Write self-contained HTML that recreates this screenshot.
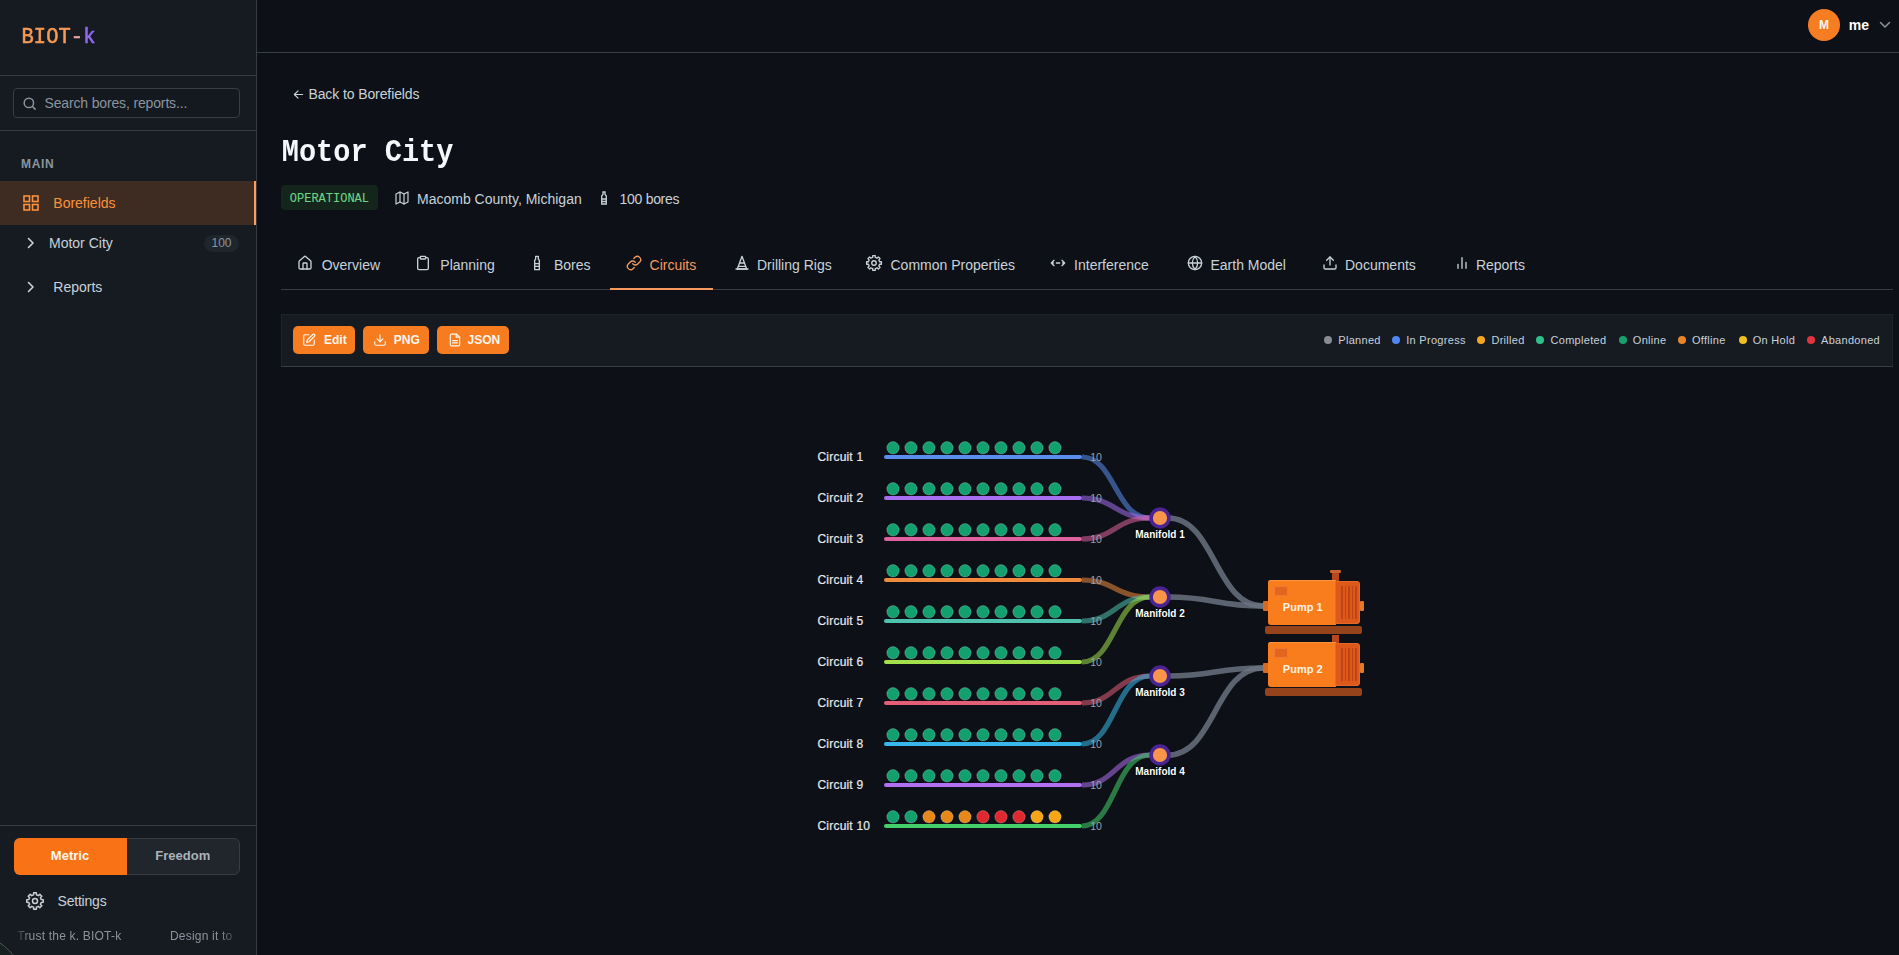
<!DOCTYPE html>
<html><head><meta charset="utf-8"><title>BIOT-k — Motor City Circuits</title>
<style>
html,body{margin:0;padding:0;}
body{width:1899px;height:955px;overflow:hidden;background:#0d1117;font-family:'Liberation Sans', sans-serif;position:relative;}
.t{position:absolute;white-space:pre;font-family:'Liberation Sans', sans-serif;}
.r{position:absolute;}
</style></head><body>
<div class="r" style="left:0px;top:0px;width:256px;height:955px;background:#161b22;"></div>
<div class="r" style="left:256px;top:0px;width:1px;height:955px;background:#383d45;"></div>
<div class="t" style="left:21.5px;top:27.50px;font-family:'Liberation Mono', monospace;font-size:20.4px;line-height:20.4px;font-weight:400;-webkit-text-stroke:0.55px currentColor;transform:scaleY(1.06);transform-origin:0 15.5px;letter-spacing:0.1px;"><span style="color:#f79a55">BIOT</span><span style="color:#eba2a6">-</span><span style="color:#9068f2">k</span></div>
<div class="r" style="left:0px;top:75px;width:256px;height:1px;background:#383d45;"></div>
<div class="r" style="left:13px;top:88px;width:227px;height:30px;background:#14191f;border:1px solid #383d45;border-radius:4px;box-sizing:border-box;"></div>
<svg class="r" style="left:21.5px;top:95.5px" width="15" height="15" viewBox="0 0 24 24" fill="none" stroke="#8b949e" stroke-width="2.4" stroke-linecap="round"><circle cx="11" cy="11" r="7.5"/><path d="M21 21l-4.3-4.3"/></svg>
<div class="t" style="left:44.5px;top:96.40px;font-size:14px;line-height:14px;color:#8b949e;font-weight:400;letter-spacing:-0.15px;">Search bores, reports...</div>
<div class="r" style="left:0px;top:130px;width:256px;height:1px;background:#383d45;"></div>
<div class="t" style="left:21px;top:157.80px;font-size:12px;line-height:12px;color:#8b949e;font-weight:700;letter-spacing:0.7px;">MAIN</div>
<div class="r" style="left:0px;top:181px;width:256px;height:44px;background:#3e2b21;"></div>
<div class="r" style="left:254px;top:181px;width:2px;height:44px;background:#f7a05a;"></div>
<svg class="r" style="left:23px;top:195px" width="16" height="16" viewBox="0 0 16 16" fill="none" stroke="#fb923c" stroke-width="1.6"><rect x="1" y="1" width="5.5" height="5.5"/><rect x="9.5" y="1" width="5.5" height="5.5"/><rect x="1" y="9.5" width="5.5" height="5.5"/><rect x="9.5" y="9.5" width="5.5" height="5.5"/></svg>
<div class="t" style="left:53.3px;top:196.40px;font-size:14px;line-height:14px;color:#fb923c;font-weight:400;">Borefields</div>
<svg class="r" style="left:26px;top:237px" width="10" height="12" viewBox="0 0 10 12" fill="none" stroke="#c9d1d9" stroke-width="1.6" stroke-linecap="round" stroke-linejoin="round"><path d="M2.5 1.5l4.5 4.5-4.5 4.5"/></svg>
<div class="t" style="left:49px;top:236.10px;font-size:14px;line-height:14px;color:#c9d1d9;font-weight:400;">Motor City</div>
<div class="r" style="left:204px;top:235px;width:35px;height:17px;background:#1f252d;border-radius:9px;"></div>
<div class="t" style="left:221.5px;top:237.30px;font-size:12px;line-height:12px;color:#8b949e;font-weight:400;transform:translateX(-50%);">100</div>
<svg class="r" style="left:26px;top:281px" width="10" height="12" viewBox="0 0 10 12" fill="none" stroke="#c9d1d9" stroke-width="1.6" stroke-linecap="round" stroke-linejoin="round"><path d="M2.5 1.5l4.5 4.5-4.5 4.5"/></svg>
<div class="t" style="left:53.3px;top:280.10px;font-size:14px;line-height:14px;color:#c9d1d9;font-weight:400;">Reports</div>
<div class="r" style="left:0px;top:825px;width:256px;height:1px;background:#383d45;"></div>
<div class="r" style="left:14px;top:838px;width:226px;height:37px;background:#21262d;border:1px solid #383d45;border-radius:6px;box-sizing:border-box;"></div>
<div class="r" style="left:14px;top:838px;width:113px;height:37px;background:#f97316;border-radius:6px 0 0 6px;"></div>
<div class="t" style="left:70px;top:849.45px;font-size:13px;line-height:13px;color:#fff7ed;font-weight:700;transform:translateX(-50%);">Metric</div>
<div class="t" style="left:182.8px;top:849.45px;font-size:13px;line-height:13px;color:#aab2bb;font-weight:700;transform:translateX(-50%);">Freedom</div>
<svg class="r" style="left:25px;top:891px" width="20" height="20" viewBox="0 0 24 24" fill="none" stroke="#c9d1d9" stroke-width="1.8" stroke-linecap="round" stroke-linejoin="round"><path d="M10.28 4.60 L10.36 2.14 L13.64 2.14 L13.72 4.60 L16.02 5.55 L17.81 3.86 L20.14 6.19 L18.45 7.98 L19.40 10.28 L21.86 10.36 L21.86 13.64 L19.40 13.72 L18.45 16.02 L20.14 17.81 L17.81 20.14 L16.02 18.45 L13.72 19.40 L13.64 21.86 L10.36 21.86 L10.28 19.40 L7.98 18.45 L6.19 20.14 L3.86 17.81 L5.55 16.02 L4.60 13.72 L2.14 13.64 L2.14 10.36 L4.60 10.28 L5.55 7.98 L3.86 6.19 L6.19 3.86 L7.98 5.55z"/><circle cx="12" cy="12" r="3"/></svg>
<div class="t" style="left:57.5px;top:894.30px;font-size:14px;line-height:14px;color:#c9d1d9;font-weight:400;letter-spacing:-0.2px;">Settings</div>
<div class="r" style="left:14px;top:920px;width:226px;height:30px;overflow:hidden;-webkit-mask-image:linear-gradient(to right,transparent 0,#000 16px,#000 206px,transparent 226px);mask-image:linear-gradient(to right,transparent 0,#000 16px,#000 206px,transparent 226px);"><div class="r" style="left:-14px;top:-920px;width:256px;height:955px;"><div class="t" style="left:17.3px;top:930.20px;font-size:12px;line-height:12px;color:#8b949e;font-weight:400;letter-spacing:0.2px;">Trust the k. BIOT-k</div>
<div class="t" style="left:170px;top:930.20px;font-size:12px;line-height:12px;color:#8b949e;font-weight:400;letter-spacing:0.2px;">Design it to</div>
</div></div><div class="r" style="left:-109.6px;top:930.4px;width:139.2px;height:139.2px;border-radius:50%;background:#16201f;border:1.5px solid #52575a;box-sizing:border-box;"></div><div class="r" style="left:257px;top:52px;width:1642px;height:1px;background:#383d45;"></div>
<div class="r" style="left:1808px;top:9px;width:32px;height:32px;background:#f77d22;border-radius:50%;"></div>
<div class="t" style="left:1824px;top:18.60px;font-size:12px;line-height:12px;color:#fff7ed;font-weight:700;transform:translateX(-50%);">M</div>
<div class="t" style="left:1848.8px;top:18.00px;font-size:14px;line-height:14px;color:#ffffff;font-weight:700;">me</div>
<svg class="r" style="left:1879px;top:20px" width="12" height="10" viewBox="0 0 12 10" fill="none" stroke="#8b949e" stroke-width="1.5" stroke-linecap="round" stroke-linejoin="round"><path d="M1.5 2.5l4.5 4.5 4.5-4.5"/></svg>
<svg class="r" style="left:293px;top:89px" width="11" height="11" viewBox="0 0 12 12" fill="none" stroke="#c9d1d9" stroke-width="1.3" stroke-linecap="round" stroke-linejoin="round"><path d="M10.5 6H1.5M5.5 2L1.5 6l4 4"/></svg>
<div class="t" style="left:308.4px;top:87.00px;font-size:14px;line-height:14px;color:#c9d1d9;font-weight:400;letter-spacing:-0.1px;">Back to Borefields</div>
<div class="t" style="left:281.8px;top:139.66px;font-size:28.6px;line-height:28.6px;color:#f5f7fa;font-weight:700;font-family:'Liberation Mono', monospace;transform:scaleY(1.12);transform-origin:0 21.736px;">Motor City</div>
<div class="r" style="left:281px;top:185px;width:97px;height:25px;background:#14261b;border-radius:4px;"></div>
<div class="t" style="left:289.8px;top:192.68px;font-size:12px;line-height:12px;color:#6fd488;font-weight:400;font-family:'Liberation Mono', monospace;-webkit-text-stroke:0.1px currentColor;">OPERATIONAL</div>
<svg class="r" style="left:394px;top:190px" width="16" height="16" viewBox="0 0 24 24" fill="none" stroke="#c9d1d9" stroke-width="1.8" stroke-linecap="round" stroke-linejoin="round"><path d="M3 6l6-3 6 3 6-3v15l-6 3-6-3-6 3z"/><path d="M9 3v15M15 6v15"/></svg>
<div class="t" style="left:417px;top:191.50px;font-size:14px;line-height:14px;color:#c9d1d9;font-weight:400;">Macomb County, Michigan</div>
<svg class="r" style="left:600px;top:191px" width="8" height="14" viewBox="0 0 8 14" fill="none" stroke="#c9d1d9" stroke-width="1.3"><path d="M3 1h2v2.5l1.3 1.5v8H1.7V5L3 3.5z"/><path d="M2 8h4M2 10.5h4"/></svg>
<div class="t" style="left:619.6px;top:191.50px;font-size:14px;line-height:14px;color:#c9d1d9;font-weight:400;letter-spacing:-0.3px;">100 bores</div>
<div class="r" style="left:281px;top:289px;width:1612px;height:1px;background:#383d45;"></div>
<div class="r" style="left:610px;top:288px;width:103px;height:2px;background:#f59a5e;"></div>
<svg class="r" style="left:296.5px;top:255.0px" width="16" height="16" viewBox="0 0 24 24" fill="none" stroke="#c9d1d9" stroke-width="2" stroke-linecap="round" stroke-linejoin="round"><path d="M15 21v-8a1 1 0 0 0-1-1h-4a1 1 0 0 0-1 1v8"/><path d="M3 10a2 2 0 0 1 .709-1.528l7-5.999a2 2 0 0 1 2.582 0l7 5.999A2 2 0 0 1 21 10v9a2 2 0 0 1-2 2H5a2 2 0 0 1-2-2z"/></svg>
<div class="t" style="left:321.7px;top:258.10px;font-size:14px;line-height:14px;color:#c9d1d9;font-weight:400;">Overview</div>
<svg class="r" style="left:415.0px;top:255.0px" width="16" height="16" viewBox="0 0 24 24" fill="none" stroke="#c9d1d9" stroke-width="2" stroke-linecap="round" stroke-linejoin="round"><rect width="8" height="4" x="8" y="2" rx="1"/><path d="M16 4h2a2 2 0 0 1 2 2v14a2 2 0 0 1-2 2H6a2 2 0 0 1-2-2V6a2 2 0 0 1 2-2h2"/></svg>
<div class="t" style="left:440.3px;top:258.10px;font-size:14px;line-height:14px;color:#c9d1d9;font-weight:400;">Planning</div>
<svg class="r" style="left:529.0px;top:255.0px" width="16" height="16" viewBox="0 0 24 24" fill="none" stroke="#c9d1d9" stroke-width="2" stroke-linecap="round" stroke-linejoin="round"><path d="M10 2h4v4l1.5 2v14h-7V8L10 6z"/><path d="M9 13h6M9 17h6"/></svg>
<div class="t" style="left:554px;top:258.10px;font-size:14px;line-height:14px;color:#c9d1d9;font-weight:400;">Bores</div>
<svg class="r" style="left:625.9px;top:255.0px" width="16" height="16" viewBox="0 0 24 24" fill="none" stroke="#f59a5e" stroke-width="2" stroke-linecap="round" stroke-linejoin="round"><path d="M10 13a5 5 0 0 0 7.54.54l3-3a5 5 0 0 0-7.07-7.07l-1.72 1.71"/><path d="M14 11a5 5 0 0 0-7.54-.54l-3 3a5 5 0 0 0 7.07 7.07l1.71-1.71"/></svg>
<div class="t" style="left:649.6px;top:258.10px;font-size:14px;line-height:14px;color:#f59a5e;font-weight:400;">Circuits</div>
<svg class="r" style="left:734.0px;top:255.0px" width="16" height="16" viewBox="0 0 24 24" fill="none" stroke="#c9d1d9" stroke-width="2" stroke-linecap="round" stroke-linejoin="round"><path d="M12 2L5 21h14z"/><path d="M9 12h6M7 17h10M3 21h18"/></svg>
<div class="t" style="left:757px;top:258.10px;font-size:14px;line-height:14px;color:#c9d1d9;font-weight:400;">Drilling Rigs</div>
<svg class="r" style="left:865.2px;top:254.0px" width="18" height="18" viewBox="0 0 24 24" fill="none" stroke="#c9d1d9" stroke-width="1.8" stroke-linecap="round" stroke-linejoin="round"><path d="M10.28 4.60 L10.36 2.14 L13.64 2.14 L13.72 4.60 L16.02 5.55 L17.81 3.86 L20.14 6.19 L18.45 7.98 L19.40 10.28 L21.86 10.36 L21.86 13.64 L19.40 13.72 L18.45 16.02 L20.14 17.81 L17.81 20.14 L16.02 18.45 L13.72 19.40 L13.64 21.86 L10.36 21.86 L10.28 19.40 L7.98 18.45 L6.19 20.14 L3.86 17.81 L5.55 16.02 L4.60 13.72 L2.14 13.64 L2.14 10.36 L4.60 10.28 L5.55 7.98 L3.86 6.19 L6.19 3.86 L7.98 5.55z"/><circle cx="12" cy="12" r="3"/></svg>
<div class="t" style="left:890.5px;top:258.10px;font-size:14px;line-height:14px;color:#c9d1d9;font-weight:400;">Common Properties</div>
<svg class="r" style="left:1050.4px;top:255.0px" width="16" height="16" viewBox="0 0 24 24" fill="none" stroke="#c9d1d9" stroke-width="2" stroke-linecap="round" stroke-linejoin="round"><path d="M6 8l-4 4 4 4M18 8l4 4-4 4M2 12h3M9.5 12h5M19 12h3"/></svg>
<div class="t" style="left:1074.1px;top:258.10px;font-size:14px;line-height:14px;color:#c9d1d9;font-weight:400;">Interference</div>
<svg class="r" style="left:1186.8px;top:255.0px" width="16" height="16" viewBox="0 0 24 24" fill="none" stroke="#c9d1d9" stroke-width="2" stroke-linecap="round" stroke-linejoin="round"><circle cx="12" cy="12" r="10"/><path d="M2 12h20"/><path d="M12 2a15 15 0 0 1 4 10 15 15 0 0 1-4 10 15 15 0 0 1-4-10 15 15 0 0 1 4-10z"/></svg>
<div class="t" style="left:1210.5px;top:258.10px;font-size:14px;line-height:14px;color:#c9d1d9;font-weight:400;">Earth Model</div>
<svg class="r" style="left:1322.0px;top:255.0px" width="16" height="16" viewBox="0 0 24 24" fill="none" stroke="#c9d1d9" stroke-width="2" stroke-linecap="round" stroke-linejoin="round"><path d="M21 15v4a2 2 0 0 1-2 2H5a2 2 0 0 1-2-2v-4"/><path d="M17 8l-5-5-5 5"/><path d="M12 3v12"/></svg>
<div class="t" style="left:1345px;top:258.10px;font-size:14px;line-height:14px;color:#c9d1d9;font-weight:400;">Documents</div>
<svg class="r" style="left:1454.0px;top:255.0px" width="16" height="16" viewBox="0 0 24 24" fill="none" stroke="#c9d1d9" stroke-width="2" stroke-linecap="round" stroke-linejoin="round"><path d="M6 20v-6M12 20V4M18 20v-9"/></svg>
<div class="t" style="left:1475.9px;top:258.10px;font-size:14px;line-height:14px;color:#c9d1d9;font-weight:400;">Reports</div>
<div class="r" style="left:281px;top:314px;width:1612px;height:52px;background:#161b22;box-shadow:inset 1px 1px 0 #1e2329,inset -1px 0 0 #1e2329;"></div>
<div class="r" style="left:281px;top:366px;width:1612px;height:1px;background:#383d45;"></div>
<div class="r" style="left:293px;top:326px;width:62px;height:28px;background:#f77b1f;border-radius:5px;"></div>
<svg class="r" style="left:301.7px;top:333px" width="14" height="14" viewBox="0 0 24 24" fill="none" stroke="#fff7ed" stroke-width="2" stroke-linecap="round" stroke-linejoin="round"><path d="M12 3H5a2 2 0 0 0-2 2v14a2 2 0 0 0 2 2h14a2 2 0 0 0 2-2v-7"/><path d="M18.4 2.6a2.1 2.1 0 0 1 3 3L12 15l-4 1 1-4z"/></svg>
<div class="t" style="left:324px;top:334.00px;font-size:12px;line-height:12px;color:#fff7ed;font-weight:700;">Edit</div>
<div class="r" style="left:363px;top:326px;width:66px;height:28px;background:#f77b1f;border-radius:5px;"></div>
<svg class="r" style="left:372.8px;top:333px" width="14" height="14" viewBox="0 0 24 24" fill="none" stroke="#fff7ed" stroke-width="2" stroke-linecap="round" stroke-linejoin="round"><path d="M21 15v4a2 2 0 0 1-2 2H5a2 2 0 0 1-2-2v-4"/><path d="M7 10l5 5 5-5"/><path d="M12 15V3"/></svg>
<div class="t" style="left:393.8px;top:334.00px;font-size:12px;line-height:12px;color:#fff7ed;font-weight:700;">PNG</div>
<div class="r" style="left:437px;top:326px;width:72px;height:28px;background:#f77b1f;border-radius:5px;"></div>
<svg class="r" style="left:447.8px;top:333px" width="14" height="14" viewBox="0 0 24 24" fill="none" stroke="#fff7ed" stroke-width="2" stroke-linecap="round" stroke-linejoin="round"><path d="M15 2H6a2 2 0 0 0-2 2v16a2 2 0 0 0 2 2h12a2 2 0 0 0 2-2V7z"/><path d="M14 2v5h6M8 13h8M8 17h8"/></svg>
<div class="t" style="left:467.5px;top:334.00px;font-size:12px;line-height:12px;color:#fff7ed;font-weight:700;">JSON</div>
<div class="r" style="left:1323.7px;top:336px;width:8px;height:8px;background:#868b94;border-radius:50%;"></div>
<div class="t" style="left:1338.3px;top:334.75px;font-size:11px;line-height:11px;color:#c9d1d9;font-weight:400;letter-spacing:0.3px;">Planned</div>
<div class="r" style="left:1391.7px;top:336px;width:8px;height:8px;background:#4f86f0;border-radius:50%;"></div>
<div class="t" style="left:1406.2px;top:334.75px;font-size:11px;line-height:11px;color:#c9d1d9;font-weight:400;letter-spacing:0.3px;">In Progress</div>
<div class="r" style="left:1476.8px;top:336px;width:8px;height:8px;background:#f5a524;border-radius:50%;"></div>
<div class="t" style="left:1491.4px;top:334.75px;font-size:11px;line-height:11px;color:#c9d1d9;font-weight:400;letter-spacing:0.3px;">Drilled</div>
<div class="r" style="left:1536px;top:336px;width:8px;height:8px;background:#2fbf8a;border-radius:50%;"></div>
<div class="t" style="left:1550.5px;top:334.75px;font-size:11px;line-height:11px;color:#c9d1d9;font-weight:400;letter-spacing:0.3px;">Completed</div>
<div class="r" style="left:1619.2px;top:336px;width:8px;height:8px;background:#16a06e;border-radius:50%;"></div>
<div class="t" style="left:1632.8px;top:334.75px;font-size:11px;line-height:11px;color:#c9d1d9;font-weight:400;letter-spacing:0.3px;">Online</div>
<div class="r" style="left:1678px;top:336px;width:8px;height:8px;background:#e8852a;border-radius:50%;"></div>
<div class="t" style="left:1692px;top:334.75px;font-size:11px;line-height:11px;color:#c9d1d9;font-weight:400;letter-spacing:0.3px;">Offline</div>
<div class="r" style="left:1739px;top:336px;width:8px;height:8px;background:#f0c020;border-radius:50%;"></div>
<div class="t" style="left:1752.7px;top:334.75px;font-size:11px;line-height:11px;color:#c9d1d9;font-weight:400;letter-spacing:0.3px;">On Hold</div>
<div class="r" style="left:1807px;top:336px;width:8px;height:8px;background:#e2343a;border-radius:50%;"></div>
<div class="t" style="left:1821px;top:334.75px;font-size:11px;line-height:11px;color:#c9d1d9;font-weight:400;letter-spacing:0.3px;">Abandoned</div>
<svg class="r" style="left:0;top:0" width="1899" height="955" viewBox="0 0 1899 955"><path d="M1168 518 C1215 518 1215 606 1263 606" stroke="#6b7280" stroke-opacity="0.85" stroke-width="5.5" fill="none"/><path d="M1168 597 C1215 597 1215 606 1263 606" stroke="#6b7280" stroke-opacity="0.85" stroke-width="5.5" fill="none"/><path d="M1168 676 C1215 676 1215 668 1263 668" stroke="#6b7280" stroke-opacity="0.85" stroke-width="5.5" fill="none"/><path d="M1168 755 C1215 755 1215 668 1263 668" stroke="#6b7280" stroke-opacity="0.85" stroke-width="5.5" fill="none"/><path d="M1082 457 C1115 457 1115 518 1150 518" stroke="#5b8dee" stroke-opacity="0.55" stroke-width="5.2" fill="none"/><path d="M1082 498 C1115 498 1115 518 1150 518" stroke="#a66ef0" stroke-opacity="0.55" stroke-width="5.2" fill="none"/><path d="M1082 539 C1115 539 1115 518 1150 518" stroke="#e0619f" stroke-opacity="0.55" stroke-width="5.2" fill="none"/><path d="M1082 580 C1115 580 1115 597 1150 597" stroke="#f08a3c" stroke-opacity="0.55" stroke-width="5.2" fill="none"/><path d="M1082 621 C1115 621 1115 597 1150 597" stroke="#4fc2ae" stroke-opacity="0.55" stroke-width="5.2" fill="none"/><path d="M1082 662 C1115 662 1115 597 1150 597" stroke="#a3e04a" stroke-opacity="0.55" stroke-width="5.2" fill="none"/><path d="M1082 703 C1115 703 1115 676 1150 676" stroke="#e35f78" stroke-opacity="0.55" stroke-width="5.2" fill="none"/><path d="M1082 744 C1115 744 1115 676 1150 676" stroke="#38b8ea" stroke-opacity="0.55" stroke-width="5.2" fill="none"/><path d="M1082 785 C1115 785 1115 755 1150 755" stroke="#b070ef" stroke-opacity="0.55" stroke-width="5.2" fill="none"/><path d="M1082 826 C1115 826 1115 755 1150 755" stroke="#45cf6a" stroke-opacity="0.55" stroke-width="5.2" fill="none"/><line x1="886" y1="457" x2="1080" y2="457" stroke="#5b8dee" stroke-width="4" stroke-linecap="round"/><circle cx="893" cy="447.8" r="6.2" fill="#12a06f" stroke="#ffffff" stroke-opacity="0.22" stroke-width="1"/><circle cx="911" cy="447.8" r="6.2" fill="#12a06f" stroke="#ffffff" stroke-opacity="0.22" stroke-width="1"/><circle cx="929" cy="447.8" r="6.2" fill="#12a06f" stroke="#ffffff" stroke-opacity="0.22" stroke-width="1"/><circle cx="947" cy="447.8" r="6.2" fill="#12a06f" stroke="#ffffff" stroke-opacity="0.22" stroke-width="1"/><circle cx="965" cy="447.8" r="6.2" fill="#12a06f" stroke="#ffffff" stroke-opacity="0.22" stroke-width="1"/><circle cx="983" cy="447.8" r="6.2" fill="#12a06f" stroke="#ffffff" stroke-opacity="0.22" stroke-width="1"/><circle cx="1001" cy="447.8" r="6.2" fill="#12a06f" stroke="#ffffff" stroke-opacity="0.22" stroke-width="1"/><circle cx="1019" cy="447.8" r="6.2" fill="#12a06f" stroke="#ffffff" stroke-opacity="0.22" stroke-width="1"/><circle cx="1037" cy="447.8" r="6.2" fill="#12a06f" stroke="#ffffff" stroke-opacity="0.22" stroke-width="1"/><circle cx="1055" cy="447.8" r="6.2" fill="#12a06f" stroke="#ffffff" stroke-opacity="0.22" stroke-width="1"/><line x1="886" y1="498" x2="1080" y2="498" stroke="#a66ef0" stroke-width="4" stroke-linecap="round"/><circle cx="893" cy="488.8" r="6.2" fill="#12a06f" stroke="#ffffff" stroke-opacity="0.22" stroke-width="1"/><circle cx="911" cy="488.8" r="6.2" fill="#12a06f" stroke="#ffffff" stroke-opacity="0.22" stroke-width="1"/><circle cx="929" cy="488.8" r="6.2" fill="#12a06f" stroke="#ffffff" stroke-opacity="0.22" stroke-width="1"/><circle cx="947" cy="488.8" r="6.2" fill="#12a06f" stroke="#ffffff" stroke-opacity="0.22" stroke-width="1"/><circle cx="965" cy="488.8" r="6.2" fill="#12a06f" stroke="#ffffff" stroke-opacity="0.22" stroke-width="1"/><circle cx="983" cy="488.8" r="6.2" fill="#12a06f" stroke="#ffffff" stroke-opacity="0.22" stroke-width="1"/><circle cx="1001" cy="488.8" r="6.2" fill="#12a06f" stroke="#ffffff" stroke-opacity="0.22" stroke-width="1"/><circle cx="1019" cy="488.8" r="6.2" fill="#12a06f" stroke="#ffffff" stroke-opacity="0.22" stroke-width="1"/><circle cx="1037" cy="488.8" r="6.2" fill="#12a06f" stroke="#ffffff" stroke-opacity="0.22" stroke-width="1"/><circle cx="1055" cy="488.8" r="6.2" fill="#12a06f" stroke="#ffffff" stroke-opacity="0.22" stroke-width="1"/><line x1="886" y1="539" x2="1080" y2="539" stroke="#e0619f" stroke-width="4" stroke-linecap="round"/><circle cx="893" cy="529.8" r="6.2" fill="#12a06f" stroke="#ffffff" stroke-opacity="0.22" stroke-width="1"/><circle cx="911" cy="529.8" r="6.2" fill="#12a06f" stroke="#ffffff" stroke-opacity="0.22" stroke-width="1"/><circle cx="929" cy="529.8" r="6.2" fill="#12a06f" stroke="#ffffff" stroke-opacity="0.22" stroke-width="1"/><circle cx="947" cy="529.8" r="6.2" fill="#12a06f" stroke="#ffffff" stroke-opacity="0.22" stroke-width="1"/><circle cx="965" cy="529.8" r="6.2" fill="#12a06f" stroke="#ffffff" stroke-opacity="0.22" stroke-width="1"/><circle cx="983" cy="529.8" r="6.2" fill="#12a06f" stroke="#ffffff" stroke-opacity="0.22" stroke-width="1"/><circle cx="1001" cy="529.8" r="6.2" fill="#12a06f" stroke="#ffffff" stroke-opacity="0.22" stroke-width="1"/><circle cx="1019" cy="529.8" r="6.2" fill="#12a06f" stroke="#ffffff" stroke-opacity="0.22" stroke-width="1"/><circle cx="1037" cy="529.8" r="6.2" fill="#12a06f" stroke="#ffffff" stroke-opacity="0.22" stroke-width="1"/><circle cx="1055" cy="529.8" r="6.2" fill="#12a06f" stroke="#ffffff" stroke-opacity="0.22" stroke-width="1"/><line x1="886" y1="580" x2="1080" y2="580" stroke="#f08a3c" stroke-width="4" stroke-linecap="round"/><circle cx="893" cy="570.8" r="6.2" fill="#12a06f" stroke="#ffffff" stroke-opacity="0.22" stroke-width="1"/><circle cx="911" cy="570.8" r="6.2" fill="#12a06f" stroke="#ffffff" stroke-opacity="0.22" stroke-width="1"/><circle cx="929" cy="570.8" r="6.2" fill="#12a06f" stroke="#ffffff" stroke-opacity="0.22" stroke-width="1"/><circle cx="947" cy="570.8" r="6.2" fill="#12a06f" stroke="#ffffff" stroke-opacity="0.22" stroke-width="1"/><circle cx="965" cy="570.8" r="6.2" fill="#12a06f" stroke="#ffffff" stroke-opacity="0.22" stroke-width="1"/><circle cx="983" cy="570.8" r="6.2" fill="#12a06f" stroke="#ffffff" stroke-opacity="0.22" stroke-width="1"/><circle cx="1001" cy="570.8" r="6.2" fill="#12a06f" stroke="#ffffff" stroke-opacity="0.22" stroke-width="1"/><circle cx="1019" cy="570.8" r="6.2" fill="#12a06f" stroke="#ffffff" stroke-opacity="0.22" stroke-width="1"/><circle cx="1037" cy="570.8" r="6.2" fill="#12a06f" stroke="#ffffff" stroke-opacity="0.22" stroke-width="1"/><circle cx="1055" cy="570.8" r="6.2" fill="#12a06f" stroke="#ffffff" stroke-opacity="0.22" stroke-width="1"/><line x1="886" y1="621" x2="1080" y2="621" stroke="#4fc2ae" stroke-width="4" stroke-linecap="round"/><circle cx="893" cy="611.8" r="6.2" fill="#12a06f" stroke="#ffffff" stroke-opacity="0.22" stroke-width="1"/><circle cx="911" cy="611.8" r="6.2" fill="#12a06f" stroke="#ffffff" stroke-opacity="0.22" stroke-width="1"/><circle cx="929" cy="611.8" r="6.2" fill="#12a06f" stroke="#ffffff" stroke-opacity="0.22" stroke-width="1"/><circle cx="947" cy="611.8" r="6.2" fill="#12a06f" stroke="#ffffff" stroke-opacity="0.22" stroke-width="1"/><circle cx="965" cy="611.8" r="6.2" fill="#12a06f" stroke="#ffffff" stroke-opacity="0.22" stroke-width="1"/><circle cx="983" cy="611.8" r="6.2" fill="#12a06f" stroke="#ffffff" stroke-opacity="0.22" stroke-width="1"/><circle cx="1001" cy="611.8" r="6.2" fill="#12a06f" stroke="#ffffff" stroke-opacity="0.22" stroke-width="1"/><circle cx="1019" cy="611.8" r="6.2" fill="#12a06f" stroke="#ffffff" stroke-opacity="0.22" stroke-width="1"/><circle cx="1037" cy="611.8" r="6.2" fill="#12a06f" stroke="#ffffff" stroke-opacity="0.22" stroke-width="1"/><circle cx="1055" cy="611.8" r="6.2" fill="#12a06f" stroke="#ffffff" stroke-opacity="0.22" stroke-width="1"/><line x1="886" y1="662" x2="1080" y2="662" stroke="#a3e04a" stroke-width="4" stroke-linecap="round"/><circle cx="893" cy="652.8" r="6.2" fill="#12a06f" stroke="#ffffff" stroke-opacity="0.22" stroke-width="1"/><circle cx="911" cy="652.8" r="6.2" fill="#12a06f" stroke="#ffffff" stroke-opacity="0.22" stroke-width="1"/><circle cx="929" cy="652.8" r="6.2" fill="#12a06f" stroke="#ffffff" stroke-opacity="0.22" stroke-width="1"/><circle cx="947" cy="652.8" r="6.2" fill="#12a06f" stroke="#ffffff" stroke-opacity="0.22" stroke-width="1"/><circle cx="965" cy="652.8" r="6.2" fill="#12a06f" stroke="#ffffff" stroke-opacity="0.22" stroke-width="1"/><circle cx="983" cy="652.8" r="6.2" fill="#12a06f" stroke="#ffffff" stroke-opacity="0.22" stroke-width="1"/><circle cx="1001" cy="652.8" r="6.2" fill="#12a06f" stroke="#ffffff" stroke-opacity="0.22" stroke-width="1"/><circle cx="1019" cy="652.8" r="6.2" fill="#12a06f" stroke="#ffffff" stroke-opacity="0.22" stroke-width="1"/><circle cx="1037" cy="652.8" r="6.2" fill="#12a06f" stroke="#ffffff" stroke-opacity="0.22" stroke-width="1"/><circle cx="1055" cy="652.8" r="6.2" fill="#12a06f" stroke="#ffffff" stroke-opacity="0.22" stroke-width="1"/><line x1="886" y1="703" x2="1080" y2="703" stroke="#e35f78" stroke-width="4" stroke-linecap="round"/><circle cx="893" cy="693.8" r="6.2" fill="#12a06f" stroke="#ffffff" stroke-opacity="0.22" stroke-width="1"/><circle cx="911" cy="693.8" r="6.2" fill="#12a06f" stroke="#ffffff" stroke-opacity="0.22" stroke-width="1"/><circle cx="929" cy="693.8" r="6.2" fill="#12a06f" stroke="#ffffff" stroke-opacity="0.22" stroke-width="1"/><circle cx="947" cy="693.8" r="6.2" fill="#12a06f" stroke="#ffffff" stroke-opacity="0.22" stroke-width="1"/><circle cx="965" cy="693.8" r="6.2" fill="#12a06f" stroke="#ffffff" stroke-opacity="0.22" stroke-width="1"/><circle cx="983" cy="693.8" r="6.2" fill="#12a06f" stroke="#ffffff" stroke-opacity="0.22" stroke-width="1"/><circle cx="1001" cy="693.8" r="6.2" fill="#12a06f" stroke="#ffffff" stroke-opacity="0.22" stroke-width="1"/><circle cx="1019" cy="693.8" r="6.2" fill="#12a06f" stroke="#ffffff" stroke-opacity="0.22" stroke-width="1"/><circle cx="1037" cy="693.8" r="6.2" fill="#12a06f" stroke="#ffffff" stroke-opacity="0.22" stroke-width="1"/><circle cx="1055" cy="693.8" r="6.2" fill="#12a06f" stroke="#ffffff" stroke-opacity="0.22" stroke-width="1"/><line x1="886" y1="744" x2="1080" y2="744" stroke="#38b8ea" stroke-width="4" stroke-linecap="round"/><circle cx="893" cy="734.8" r="6.2" fill="#12a06f" stroke="#ffffff" stroke-opacity="0.22" stroke-width="1"/><circle cx="911" cy="734.8" r="6.2" fill="#12a06f" stroke="#ffffff" stroke-opacity="0.22" stroke-width="1"/><circle cx="929" cy="734.8" r="6.2" fill="#12a06f" stroke="#ffffff" stroke-opacity="0.22" stroke-width="1"/><circle cx="947" cy="734.8" r="6.2" fill="#12a06f" stroke="#ffffff" stroke-opacity="0.22" stroke-width="1"/><circle cx="965" cy="734.8" r="6.2" fill="#12a06f" stroke="#ffffff" stroke-opacity="0.22" stroke-width="1"/><circle cx="983" cy="734.8" r="6.2" fill="#12a06f" stroke="#ffffff" stroke-opacity="0.22" stroke-width="1"/><circle cx="1001" cy="734.8" r="6.2" fill="#12a06f" stroke="#ffffff" stroke-opacity="0.22" stroke-width="1"/><circle cx="1019" cy="734.8" r="6.2" fill="#12a06f" stroke="#ffffff" stroke-opacity="0.22" stroke-width="1"/><circle cx="1037" cy="734.8" r="6.2" fill="#12a06f" stroke="#ffffff" stroke-opacity="0.22" stroke-width="1"/><circle cx="1055" cy="734.8" r="6.2" fill="#12a06f" stroke="#ffffff" stroke-opacity="0.22" stroke-width="1"/><line x1="886" y1="785" x2="1080" y2="785" stroke="#b070ef" stroke-width="4" stroke-linecap="round"/><circle cx="893" cy="775.8" r="6.2" fill="#12a06f" stroke="#ffffff" stroke-opacity="0.22" stroke-width="1"/><circle cx="911" cy="775.8" r="6.2" fill="#12a06f" stroke="#ffffff" stroke-opacity="0.22" stroke-width="1"/><circle cx="929" cy="775.8" r="6.2" fill="#12a06f" stroke="#ffffff" stroke-opacity="0.22" stroke-width="1"/><circle cx="947" cy="775.8" r="6.2" fill="#12a06f" stroke="#ffffff" stroke-opacity="0.22" stroke-width="1"/><circle cx="965" cy="775.8" r="6.2" fill="#12a06f" stroke="#ffffff" stroke-opacity="0.22" stroke-width="1"/><circle cx="983" cy="775.8" r="6.2" fill="#12a06f" stroke="#ffffff" stroke-opacity="0.22" stroke-width="1"/><circle cx="1001" cy="775.8" r="6.2" fill="#12a06f" stroke="#ffffff" stroke-opacity="0.22" stroke-width="1"/><circle cx="1019" cy="775.8" r="6.2" fill="#12a06f" stroke="#ffffff" stroke-opacity="0.22" stroke-width="1"/><circle cx="1037" cy="775.8" r="6.2" fill="#12a06f" stroke="#ffffff" stroke-opacity="0.22" stroke-width="1"/><circle cx="1055" cy="775.8" r="6.2" fill="#12a06f" stroke="#ffffff" stroke-opacity="0.22" stroke-width="1"/><line x1="886" y1="826" x2="1080" y2="826" stroke="#45cf6a" stroke-width="4" stroke-linecap="round"/><circle cx="893" cy="816.8" r="6.2" fill="#12a06f" stroke="#ffffff" stroke-opacity="0.22" stroke-width="1"/><circle cx="911" cy="816.8" r="6.2" fill="#12a06f" stroke="#ffffff" stroke-opacity="0.22" stroke-width="1"/><circle cx="929" cy="816.8" r="6.2" fill="#e6891a" stroke="#ffffff" stroke-opacity="0.22" stroke-width="1"/><circle cx="947" cy="816.8" r="6.2" fill="#e6891a" stroke="#ffffff" stroke-opacity="0.22" stroke-width="1"/><circle cx="965" cy="816.8" r="6.2" fill="#e6891a" stroke="#ffffff" stroke-opacity="0.22" stroke-width="1"/><circle cx="983" cy="816.8" r="6.2" fill="#e0282e" stroke="#ffffff" stroke-opacity="0.22" stroke-width="1"/><circle cx="1001" cy="816.8" r="6.2" fill="#e0282e" stroke="#ffffff" stroke-opacity="0.22" stroke-width="1"/><circle cx="1019" cy="816.8" r="6.2" fill="#e0282e" stroke="#ffffff" stroke-opacity="0.22" stroke-width="1"/><circle cx="1037" cy="816.8" r="6.2" fill="#f5a516" stroke="#ffffff" stroke-opacity="0.22" stroke-width="1"/><circle cx="1055" cy="816.8" r="6.2" fill="#f5a516" stroke="#ffffff" stroke-opacity="0.22" stroke-width="1"/></svg>
<div class="t" style="left:817.5px;top:450.50px;font-size:12px;line-height:12px;color:#e6e9ee;font-weight:400;-webkit-text-stroke:0.2px currentColor;letter-spacing:0.2px;">Circuit 1</div>
<div class="t" style="left:1090.2px;top:451.97px;font-size:10.5px;line-height:10.5px;color:#9aa1a9;font-weight:400;">10</div>
<div class="t" style="left:817.5px;top:491.50px;font-size:12px;line-height:12px;color:#e6e9ee;font-weight:400;-webkit-text-stroke:0.2px currentColor;letter-spacing:0.2px;">Circuit 2</div>
<div class="t" style="left:1090.2px;top:492.97px;font-size:10.5px;line-height:10.5px;color:#9aa1a9;font-weight:400;">10</div>
<div class="t" style="left:817.5px;top:532.50px;font-size:12px;line-height:12px;color:#e6e9ee;font-weight:400;-webkit-text-stroke:0.2px currentColor;letter-spacing:0.2px;">Circuit 3</div>
<div class="t" style="left:1090.2px;top:533.98px;font-size:10.5px;line-height:10.5px;color:#9aa1a9;font-weight:400;">10</div>
<div class="t" style="left:817.5px;top:573.50px;font-size:12px;line-height:12px;color:#e6e9ee;font-weight:400;-webkit-text-stroke:0.2px currentColor;letter-spacing:0.2px;">Circuit 4</div>
<div class="t" style="left:1090.2px;top:574.98px;font-size:10.5px;line-height:10.5px;color:#9aa1a9;font-weight:400;">10</div>
<div class="t" style="left:817.5px;top:614.50px;font-size:12px;line-height:12px;color:#e6e9ee;font-weight:400;-webkit-text-stroke:0.2px currentColor;letter-spacing:0.2px;">Circuit 5</div>
<div class="t" style="left:1090.2px;top:615.98px;font-size:10.5px;line-height:10.5px;color:#9aa1a9;font-weight:400;">10</div>
<div class="t" style="left:817.5px;top:655.50px;font-size:12px;line-height:12px;color:#e6e9ee;font-weight:400;-webkit-text-stroke:0.2px currentColor;letter-spacing:0.2px;">Circuit 6</div>
<div class="t" style="left:1090.2px;top:656.98px;font-size:10.5px;line-height:10.5px;color:#9aa1a9;font-weight:400;">10</div>
<div class="t" style="left:817.5px;top:696.50px;font-size:12px;line-height:12px;color:#e6e9ee;font-weight:400;-webkit-text-stroke:0.2px currentColor;letter-spacing:0.2px;">Circuit 7</div>
<div class="t" style="left:1090.2px;top:697.98px;font-size:10.5px;line-height:10.5px;color:#9aa1a9;font-weight:400;">10</div>
<div class="t" style="left:817.5px;top:737.50px;font-size:12px;line-height:12px;color:#e6e9ee;font-weight:400;-webkit-text-stroke:0.2px currentColor;letter-spacing:0.2px;">Circuit 8</div>
<div class="t" style="left:1090.2px;top:738.98px;font-size:10.5px;line-height:10.5px;color:#9aa1a9;font-weight:400;">10</div>
<div class="t" style="left:817.5px;top:778.50px;font-size:12px;line-height:12px;color:#e6e9ee;font-weight:400;-webkit-text-stroke:0.2px currentColor;letter-spacing:0.2px;">Circuit 9</div>
<div class="t" style="left:1090.2px;top:779.98px;font-size:10.5px;line-height:10.5px;color:#9aa1a9;font-weight:400;">10</div>
<div class="t" style="left:817.5px;top:819.50px;font-size:12px;line-height:12px;color:#e6e9ee;font-weight:400;-webkit-text-stroke:0.2px currentColor;letter-spacing:0.2px;">Circuit 10</div>
<div class="t" style="left:1090.2px;top:820.98px;font-size:10.5px;line-height:10.5px;color:#9aa1a9;font-weight:400;">10</div>
<svg class="r" style="left:0;top:0" width="1899" height="955" viewBox="0 0 1899 955"><circle cx="1160" cy="518" r="8.9" fill="#f9954a" stroke="#4a2492" stroke-width="3.6"/><circle cx="1160" cy="597" r="8.9" fill="#f9954a" stroke="#4a2492" stroke-width="3.6"/><circle cx="1160" cy="676" r="8.9" fill="#f9954a" stroke="#4a2492" stroke-width="3.6"/><circle cx="1160" cy="755" r="8.9" fill="#f9954a" stroke="#4a2492" stroke-width="3.6"/></svg>
<div class="t" style="left:1160px;top:530.10px;font-size:10px;line-height:10px;color:#ffffff;font-weight:700;transform:translateX(-50%);text-shadow:0 0 2px #000,0 0 2px #000;">Manifold 1</div>
<div class="t" style="left:1160px;top:609.10px;font-size:10px;line-height:10px;color:#ffffff;font-weight:700;transform:translateX(-50%);text-shadow:0 0 2px #000,0 0 2px #000;">Manifold 2</div>
<div class="t" style="left:1160px;top:688.10px;font-size:10px;line-height:10px;color:#ffffff;font-weight:700;transform:translateX(-50%);text-shadow:0 0 2px #000,0 0 2px #000;">Manifold 3</div>
<div class="t" style="left:1160px;top:767.10px;font-size:10px;line-height:10px;color:#ffffff;font-weight:700;transform:translateX(-50%);text-shadow:0 0 2px #000,0 0 2px #000;">Manifold 4</div>
<div class="r" style="left:1265px;top:626px;width:97px;height:8px;background:#95431a;border-radius:2px;"></div>
<div class="r" style="left:1262.8px;top:601px;width:6px;height:10px;background:#d9691e;border-radius:1px;"></div>
<div class="r" style="left:1359.5px;top:601px;width:4.5px;height:9.5px;background:#e2782a;border-radius:1px;"></div>
<div class="r" style="left:1331.8px;top:572.5px;width:7.5px;height:8px;background:#b8481c;"></div>
<div class="r" style="left:1330.2px;top:569.5px;width:10.6px;height:3px;background:#c8622e;border-radius:1px;"></div>
<div class="r" style="left:1267.5px;top:579.5px;width:68.5px;height:45.5px;background:#f97d1c;border-radius:3px 0 0 3px;box-shadow:inset 0 1px 0 #fb9340;"></div>
<div class="r" style="left:1335.3px;top:581px;width:24.8px;height:43px;background:#dc581b;border-radius:0 4px 4px 0;box-shadow:inset 0 0 0 1px #e56a28;"></div>
<div class="r" style="left:1341.0px;top:586px;width:1.5px;height:33px;background:#bf4516;"></div>
<div class="r" style="left:1344.6px;top:586px;width:1.5px;height:33px;background:#bf4516;"></div>
<div class="r" style="left:1348.2px;top:586px;width:1.5px;height:33px;background:#bf4516;"></div>
<div class="r" style="left:1351.8px;top:586px;width:1.5px;height:33px;background:#bf4516;"></div>
<div class="r" style="left:1355.4px;top:586px;width:1.5px;height:33px;background:#bf4516;"></div>
<div class="r" style="left:1273.8px;top:586px;width:14px;height:9.5px;background:#e4651d;border-radius:2px;box-shadow:inset 0 0 0 1px #ee7b38;"></div>
<div class="t" style="left:1302.7px;top:601.85px;font-size:11px;line-height:11px;color:#fff3e6;font-weight:700;transform:translateX(-50%);">Pump 1</div>
<div class="r" style="left:1265px;top:688px;width:97px;height:8px;background:#95431a;border-radius:2px;"></div>
<div class="r" style="left:1262.8px;top:663px;width:6px;height:10px;background:#d9691e;border-radius:1px;"></div>
<div class="r" style="left:1359.5px;top:663px;width:4.5px;height:9.5px;background:#e2782a;border-radius:1px;"></div>
<div class="r" style="left:1331.8px;top:634.5px;width:7.5px;height:8px;background:#b8481c;"></div>
<div class="r" style="left:1267.5px;top:641.5px;width:68.5px;height:45.5px;background:#f97d1c;border-radius:3px 0 0 3px;box-shadow:inset 0 1px 0 #fb9340;"></div>
<div class="r" style="left:1335.3px;top:643px;width:24.8px;height:43px;background:#dc581b;border-radius:0 4px 4px 0;box-shadow:inset 0 0 0 1px #e56a28;"></div>
<div class="r" style="left:1341.0px;top:648px;width:1.5px;height:33px;background:#bf4516;"></div>
<div class="r" style="left:1344.6px;top:648px;width:1.5px;height:33px;background:#bf4516;"></div>
<div class="r" style="left:1348.2px;top:648px;width:1.5px;height:33px;background:#bf4516;"></div>
<div class="r" style="left:1351.8px;top:648px;width:1.5px;height:33px;background:#bf4516;"></div>
<div class="r" style="left:1355.4px;top:648px;width:1.5px;height:33px;background:#bf4516;"></div>
<div class="r" style="left:1273.8px;top:648px;width:14px;height:9.5px;background:#e4651d;border-radius:2px;box-shadow:inset 0 0 0 1px #ee7b38;"></div>
<div class="t" style="left:1302.7px;top:663.85px;font-size:11px;line-height:11px;color:#fff3e6;font-weight:700;transform:translateX(-50%);">Pump 2</div>

</body></html>
